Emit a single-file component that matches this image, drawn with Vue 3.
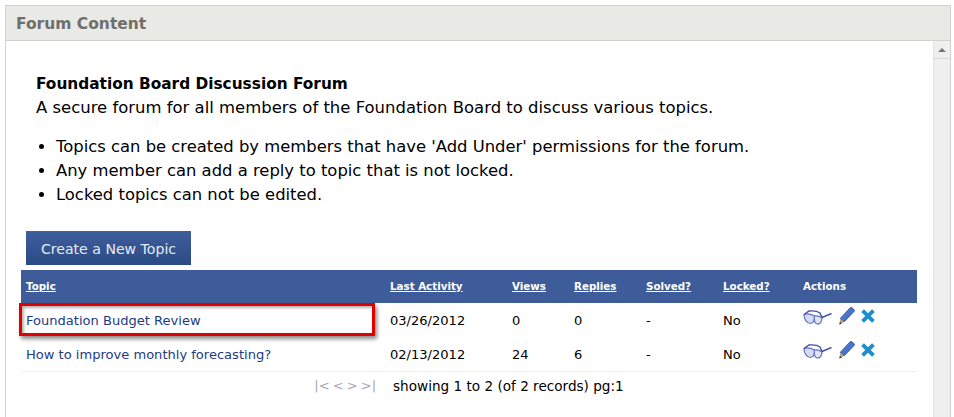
<template>
  <div class="page">
    <section class="panel">
      <header class="panel__head">Forum Content</header>
      <div class="panel__body">
        <main class="content">
          <div class="intro">
            <h1 class="intro__title">Foundation Board Discussion Forum</h1>
            <p class="intro__text">A secure forum for all members of the Foundation Board to discuss various topics.</p>
            <ul class="intro__list">
              <li v-for="rule in rules" :key="rule">{{ rule }}</li>
            </ul>
          </div>
          <button class="create-btn" type="button">Create a New Topic</button>
          <div class="grid">
            <div class="grid__row grid__row--head">
              <a class="sort">Topic</a>
              <a class="sort">Last Activity</a>
              <a class="sort">Views</a>
              <a class="sort">Replies</a>
              <a class="sort">Solved?</a>
              <a class="sort">Locked?</a>
              <span>Actions</span>
            </div>
            <div v-for="topic in topics" :key="topic.name" class="grid__row grid__row--data">
              <a class="topic-link">{{ topic.name }}</a>
              <span>{{ topic.activity }}</span>
              <span>{{ topic.views }}</span>
              <span>{{ topic.replies }}</span>
              <span>-</span>
              <span>No</span>
              <span class="actions">
                <svg class="icon-glasses" width="29" height="15" viewBox="0 0 29 15">
                  <path d="M1 4.5 C4 3.5 8 4 11.5 6 C12 9 11 13 7.5 13.5 C3.5 13.5 1 9 1 4.5Z" fill="#d6daf5" stroke="#6474bc" stroke-width="1.2"/>
                  <path d="M11.5 6 C14 5.5 17 6.5 19 8 C19 11 17 14.5 14.5 14 C12 13.5 11 10 11.5 6Z" fill="#e2e5fa" stroke="#6474bc" stroke-width="1.2"/>
                  <path d="M1 4.5 L6 1 C11 .5 15 1.5 17 3 L19 7.5 L28.5 3.5" fill="none" stroke="#4354a6" stroke-width="1.4"/>
                </svg>
                <svg class="icon-pencil" width="16" height="18" viewBox="0 0 16 18">
                  <path d="M11.5 .4 C13 .2 15.5 2.5 15.5 4 L5 15 L1.2 11.4Z" fill="#4a74cc" stroke="#2f4a98" stroke-width=".8"/>
                  <path d="M1.2 11.4 L5 15 L.3 17.6Z" fill="#c6a271"/>
                  <path d="M.3 17.6 L1 15 L2.8 16.4Z" fill="#2b2b2b"/>
                </svg>
                <svg class="icon-close" width="14" height="14" viewBox="0 0 14 14">
                  <path d="M1.6 1.6 L12.4 12.4 M12.4 1.6 L1.6 12.4" stroke="#1b8ecb" stroke-width="3.8" fill="none"/>
                </svg>
              </span>
            </div>
          </div>
          <div class="pager">
            <span class="pager__nav">|&lt; &lt; &gt; &gt;|</span>
            <span>showing 1 to 2 (of 2 records) pg:1</span>
          </div>
        </main>
        <div class="scrollbar" aria-hidden="true">
          <div class="scrollbar__up"><span class="scrollbar__arrow"></span></div>
        </div>
      </div>
    </section>
    <div class="callout" aria-hidden="true"></div>
  </div>
</template>

<script setup>
const rules = [
  "Topics can be created by members that have 'Add Under' permissions for the forum.",
  'Any member can add a reply to topic that is not locked.',
  'Locked topics can not be edited.'
]

const topics = [
  { name: 'Foundation Budget Review', activity: '03/26/2012', views: 0, replies: 0 },
  { name: 'How to improve monthly forecasting?', activity: '02/13/2012', views: 24, replies: 6 }
]
</script>

<style>
html,
body {
  margin: 0;
  background: #fff;
}
</style>

<style scoped>
.page {
  position: relative;
  width: 954px;
  height: 417px;
  overflow: hidden;
  padding: 5px 3px 0 5px;
  box-sizing: border-box;
  font-family: "DejaVu Sans", Verdana, sans-serif;
  color: #000;
}

.panel {
  height: 412px;
  border: 1px solid #d2d2d0;
  border-bottom: 0;
  box-sizing: border-box;
  display: flex;
  flex-direction: column;
}

.panel__head {
  height: 34px;
  line-height: 36px;
  padding-left: 10px;
  background: #e9e9e5;
  border-bottom: 1px solid #d2d2d0;
  color: #6f6f6b;
  font-size: 15.5px;
  font-weight: 700;
  flex-shrink: 0;
}

.panel__body {
  flex: 1;
  display: flex;
  min-height: 0;
}

.content {
  flex: 1;
  padding: 32px 16px 0 15px;
  min-width: 0;
}

.intro {
  padding-left: 15px;
  font-size: 16.4px;
  line-height: 23px;
}

.intro__title {
  margin: 0;
  font-size: 15.35px;
  line-height: 23px;
  font-weight: 700;
}

.intro__text {
  margin: 0;
  font-size: 16.47px;
}

.intro__list {
  margin: 16px 0 0;
  padding: 0 0 0 20px;
  line-height: 24px;
}

.create-btn {
  display: block;
  margin: 24px 0 5px 5px;
  width: 165px;
  height: 34px;
  padding: 2px 0 0;
  border: 0;
  background: linear-gradient(#3f5e9c, #2a4a86);
  color: #e6ecf5;
  font-family: inherit;
  font-size: 14.1px;
}

.grid__row {
  display: grid;
  grid-template-columns: 364px 122px 62px 72px 77px 80px 1fr;
  align-items: center;
  padding-left: 5px;
  font-size: 13.05px;
}

.grid__row--head {
  height: 33px;
  padding-bottom: 1px;
  box-sizing: border-box;
  background: #3e5c99;
  color: #fff;
  font-size: 10.3px;
  font-weight: 700;
}

.sort {
  text-decoration: underline;
}

.grid__row--data {
  height: 34px;
  box-sizing: border-box;
}

.grid__row--data:last-child {
  height: 35px;
  border-bottom: 1px solid #f0f0f0;
}

.topic-link {
  color: #1d3a86;
}

.actions {
  display: flex;
  align-items: center;
  margin-top: -5px;
}

.icon-pencil {
  margin: 0 6px 4px 7px;
}

.icon-close {
  margin-bottom: 4px;
}

.pager {
  display: flex;
  justify-content: center;
  gap: 17px;
  padding-top: 6px;
  font-size: 13.6px;
}

.pager__nav {
  color: #aaa6b2;
  font-size: 13px;
  word-spacing: -1px;
}

.scrollbar {
  width: 16px;
  background: #efefef;
  border-left: 1px solid #e3e3e3;
  flex-shrink: 0;
}

.scrollbar__up {
  height: 17px;
  border-bottom: 1px solid #d8d8d8;
  display: flex;
  align-items: center;
  justify-content: center;
}

.scrollbar__arrow {
  width: 0;
  height: 0;
  border: 4px solid transparent;
  border-top: 0;
  border-bottom: 4px solid #777;
}

.callout {
  position: absolute;
  left: 19px;
  top: 303px;
  width: 356px;
  height: 33px;
  box-sizing: border-box;
  border: 3px solid #e00000;
  box-shadow: 2px 3px 4px rgba(0, 0, 0, 0.45), inset 2px 2px 3px rgba(0, 0, 0, 0.3);
}
</style>
